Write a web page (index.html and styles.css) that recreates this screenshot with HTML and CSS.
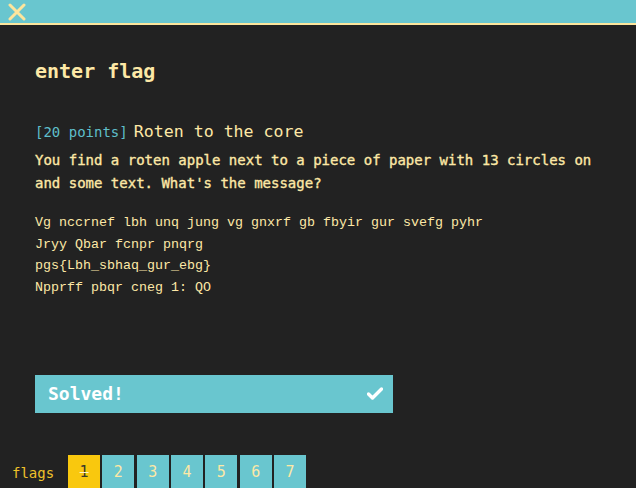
FILE: index.html
```html
<!DOCTYPE html>
<html>
<head>
<meta charset="utf-8">
<link rel="stylesheet" href="styles.css">
</head>
<body>
<header class="topbar">
  <svg class="close" width="18" height="18" viewBox="0 0 18 18"><path d="M2 2 L16 16 M16 2 L2 16" stroke="#fde59c" stroke-width="3" stroke-linecap="round"/></svg>
</header>
<main class="content">
  <h1 class="title">enter flag</h1>
  <div class="chal-head"><span class="points">[20 points]</span> <span class="chal-name">Roten to the core</span></div>
  <p class="desc">You find a roten apple next to a piece of paper with 13 circles on and some text. What's the message?</p>
  <pre class="cipher">Vg nccrnef lbh unq jung vg gnxrf gb fbyir gur svefg pyhr
Jryy Qbar fcnpr pnqrg
pgs{Lbh_sbhaq_gur_ebg}
Npprff pbqr cneg 1: QO</pre>
  <div class="solved"><span>Solved!</span>
    <svg class="check" width="16" height="13" viewBox="0 0 16 13"><path d="M1.5 7 L5.5 11 L14.5 2" stroke="#fff" stroke-width="3.4" fill="none" stroke-linecap="round" stroke-linejoin="round"/></svg>
  </div>
</main>
<footer class="flags">
  <span class="flags-label">flags</span>
  <div class="flag-list">
    <span class="flag done">1</span>
    <span class="flag">2</span>
    <span class="flag">3</span>
    <span class="flag">4</span>
    <span class="flag">5</span>
    <span class="flag">6</span>
    <span class="flag">7</span>
  </div>
</footer>
</body>
</html>
```

FILE: styles.css
```css
html, body {
  margin: 0;
  padding: 0;
  background: #222222;
  height: 100%;
  overflow: hidden;
}
body {
  font-family: "DejaVu Sans Mono", "Liberation Mono", monospace;
  color: #fde8a6;
}
.topbar {
  height: 23px;
  background: #69c6cf;
  border-bottom: 2px solid #fde59c;
  display: flex;
  align-items: center;
  padding-left: 8px;
}
.close { display: block; }
.content {
  padding: 0 35px;
}
.title {
  margin: 34px 0 0;
  font-size: 20px;
  line-height: 24px;
  font-weight: bold;
  color: #fde8a6;
}
.chal-head {
  margin-top: 37px;
  line-height: 24px;
  height: 24px;
  display: flex;
  align-items: baseline;
  gap: 6px;
}
.points {
  font-size: 14px;
  color: #5fbfca;
}
.chal-name {
  font-size: 16.6px;
  color: #fde8a6;
}
.desc {
  margin: 5px 0 0;
  font-size: 14px;
  line-height: 23px;
  font-weight: normal;
  -webkit-text-stroke: 0.35px #fde8a6;
  color: #fde8a6;
}
.cipher {
  margin: 17px 0 0;
  font-family: "Liberation Mono", monospace;
  font-size: 13.33px;
  line-height: 21.7px;
  color: #fde8a6;
}
.solved {
  margin-top: 76px;
  width: 358px;
  height: 38px;
  box-sizing: border-box;
  background: #69c6cf;
  display: flex;
  align-items: center;
  justify-content: space-between;
  padding: 0 10px 0 13px;
  color: #ffffff;
  font-weight: bold;
  font-size: 18px;
}
.check { display: block; }
.flags {
  margin-top: 42px;
  display: flex;
  align-items: stretch;
  height: 33px;
}
.flags-label {
  width: 68px;
  box-sizing: border-box;
  padding-left: 12px;
  font-size: 14px;
  color: #f0c22a;
  display: flex;
  align-items: center;
  padding-top: 3px;
}
.flag-list {
  display: flex;
  gap: 2.33px;
}
.flag {
  width: 32px;
  background: #69c6cf;
  color: #fde8a6;
  font-size: 15px;
  display: flex;
  align-items: center;
  justify-content: center;
  padding-top: 2px;
  box-sizing: border-box;
}
.flag.done {
  background: #f9c80e;
  color: #3a3a2a;
  text-decoration: line-through;
  text-decoration-color: #fff3c8;
}
```
